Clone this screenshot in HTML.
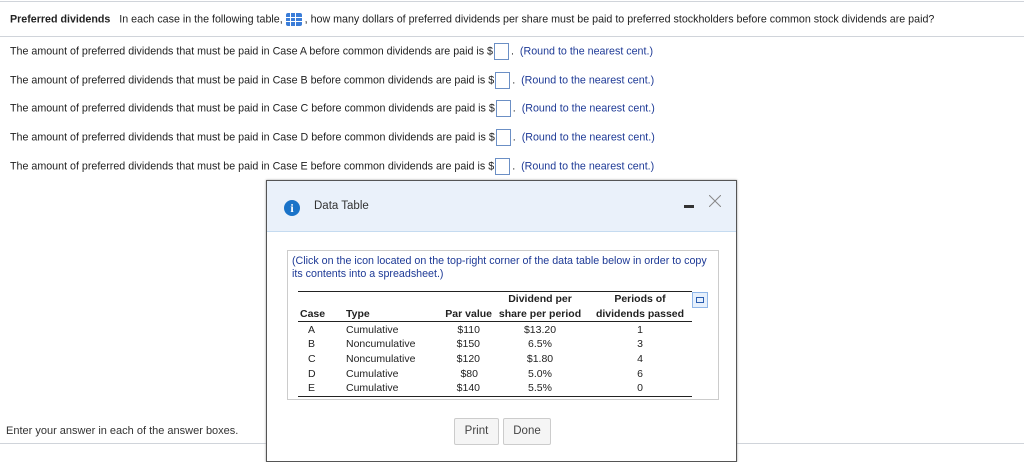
<!DOCTYPE html>
<html><head><style>
body{margin:0;width:1024px;height:452px;position:relative;background:#fff;font-family:"Liberation Sans",Arial,sans-serif;font-size:10.7px;color:#222;overflow:hidden}
.a{position:absolute;white-space:nowrap}
.hl{position:absolute;height:1px;background:#d0d4da}
.box{display:inline-block;width:13px;height:15px;border:1px solid #6b8fc5;vertical-align:middle;margin:0 2px 0 1px;background:#fff}
.blue{color:#1e3a96}
table{border-collapse:collapse;font-size:10.5px}
td{padding:0;height:14.7px;line-height:14px}
</style></head><body>
<div class="hl" style="left:0;top:1px;width:1024px"></div>
<div class="a" style="left:10px;top:13px"><b>Preferred dividends</b>&nbsp;&nbsp;&nbsp;In each case in the following table, <span style="display:inline-block;width:16px;height:13px;background:#3b7dd8;vertical-align:middle;border-radius:2px;background-image:linear-gradient(90deg,transparent 4px,#fff 4px,#fff 5px,transparent 5px,transparent 9px,#fff 9px,#fff 10px,transparent 10px),linear-gradient(transparent 4px,#fff 4px,#fff 5px,transparent 5px,transparent 8px,#fff 8px,#fff 9px,transparent 9px)"></span> , how many dollars of preferred dividends per share must be paid to preferred stockholders before common stock dividends are paid?</div>
<div class="hl" style="left:0;top:36px;width:1024px"></div>
<div class="a" style="left:10px;top:43px">The amount of preferred dividends that must be paid in Case A before common dividends are paid is $<span class="box"></span>. &nbsp;<span class="blue">(Round to the nearest cent.)</span></div>
<div class="a" style="left:10px;top:72px">The amount of preferred dividends that must be paid in Case B before common dividends are paid is $<span class="box"></span>. &nbsp;<span class="blue">(Round to the nearest cent.)</span></div>
<div class="a" style="left:10px;top:100px">The amount of preferred dividends that must be paid in Case C before common dividends are paid is $<span class="box"></span>. &nbsp;<span class="blue">(Round to the nearest cent.)</span></div>
<div class="a" style="left:10px;top:129px">The amount of preferred dividends that must be paid in Case D before common dividends are paid is $<span class="box"></span>. &nbsp;<span class="blue">(Round to the nearest cent.)</span></div>
<div class="a" style="left:10px;top:158px">The amount of preferred dividends that must be paid in Case E before common dividends are paid is $<span class="box"></span>. &nbsp;<span class="blue">(Round to the nearest cent.)</span></div>
<div class="hl" style="left:0;top:443px;width:1024px"></div>
<div class="a" style="left:6px;top:425px;font-size:11px;color:#333">Enter your answer in each of the answer boxes.</div>

<div class="a" style="left:266px;top:180px;width:469px;height:280px;border:1px solid #555;background:#fff;box-shadow:0 0 2px #999">
 <div style="position:absolute;left:0;top:0;width:469px;height:50px;background:#eaf1fa;border-bottom:1px solid #c5dbf0"></div>
 <div class="a" style="left:17px;top:19px;width:16px;height:16px;border-radius:50%;background:#1a73c8;color:#fff;font-weight:bold;font-size:12px;text-align:center;line-height:16px;font-family:'Liberation Serif',serif">i</div>
 <div class="a" style="left:47px;top:19px;font-size:11.5px;color:#333">Data Table</div>
 <div class="a" style="left:417px;top:24px;width:10px;height:3px;background:#333"></div>
 <svg class="a" style="left:442px;top:14px" width="12" height="12"><path d="M0 0L12 12M12 0L0 12" stroke="#888" stroke-width="1"/></svg>
 <div class="a" style="left:20px;top:69px;width:430px;height:148px;border:1px solid #ccc"></div>
 <div class="a blue" style="left:25px;top:74px;white-space:normal;width:420px;line-height:13px">(Click on the icon located on the top-right corner of the data table below in order to copy its contents into a spreadsheet.)</div>
 <div class="a" style="left:425px;top:111px;width:14px;height:14px;border:1px solid #8fb6e8;background:#e6f0fc"><div style="position:absolute;left:3px;top:4px;width:6px;height:4px;border:1px solid #2a5db0"></div></div>
 <table class="a" style="left:31px;top:110px;width:394px;border-top:1px solid #222;border-bottom:1px solid #222">
  <tr style="font-weight:bold"><td style="width:44px;height:13px;line-height:13px"></td><td style="width:95px"></td><td style="width:55px"></td><td style="width:96px;text-align:center">Dividend per</td><td style="text-align:center">Periods of</td></tr>
  <tr style="font-weight:bold;border-bottom:1px solid #222"><td style="padding-left:2px;height:14px;line-height:13px">Case</td><td style="padding-left:4px">Type</td><td style="text-align:right">Par value</td><td style="text-align:center">share per period</td><td style="text-align:center">dividends passed</td></tr>
  <tr><td style="padding-left:10px">A</td><td style="padding-left:4px">Cumulative</td><td style="text-align:right;padding-right:12px">$110</td><td style="text-align:center">$13.20</td><td style="text-align:center">1</td></tr>
  <tr><td style="padding-left:10px">B</td><td style="padding-left:4px">Noncumulative</td><td style="text-align:right;padding-right:12px">$150</td><td style="text-align:center">6.5%</td><td style="text-align:center">3</td></tr>
  <tr><td style="padding-left:10px">C</td><td style="padding-left:4px">Noncumulative</td><td style="text-align:right;padding-right:12px">$120</td><td style="text-align:center">$1.80</td><td style="text-align:center">4</td></tr>
  <tr><td style="padding-left:10px">D</td><td style="padding-left:4px">Cumulative</td><td style="text-align:right;padding-right:14px">$80</td><td style="text-align:center">5.0%</td><td style="text-align:center">6</td></tr>
  <tr><td style="padding-left:10px">E</td><td style="padding-left:4px">Cumulative</td><td style="text-align:right;padding-right:12px">$140</td><td style="text-align:center">5.5%</td><td style="text-align:center">0</td></tr>
 </table>
 <div class="a" style="left:187px;top:237px;width:43px;height:25px;border:1px solid #ccc;border-radius:2px;background:#f5f5f5;text-align:center;line-height:25px;font-size:11.5px;color:#444">Print</div>
 <div class="a" style="left:236px;top:237px;width:46px;height:25px;border:1px solid #ccc;border-radius:2px;background:#f5f5f5;text-align:center;line-height:25px;font-size:11.5px;color:#444">Done</div>
</div>
</body></html>
